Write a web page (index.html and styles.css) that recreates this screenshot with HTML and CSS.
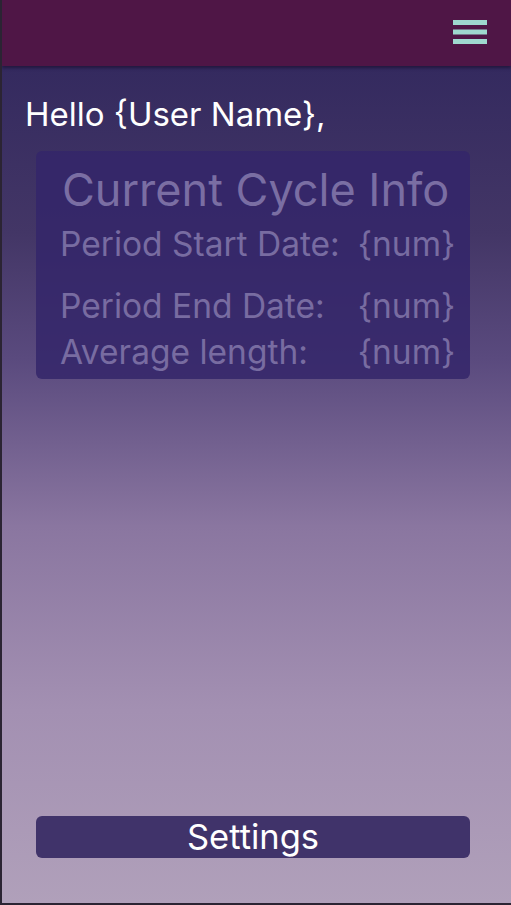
FILE: index.html
```html
<!DOCTYPE html>
<html>
<head>
<meta charset="utf-8">
<link rel="stylesheet" href="styles.css">
</head>
<body>
<div class="frame">
  <header class="topbar">
    <button class="menu" aria-label="Menu">
      <svg width="36" height="28" viewBox="0 0 36 28">
        <rect x="1" y="1" width="34" height="5" fill="#9fd8cf"/>
        <rect x="1" y="10.5" width="34" height="5" fill="#9fd8cf"/>
        <rect x="1" y="20" width="34" height="5" fill="#9fd8cf"/>
      </svg>
    </button>
  </header>
  <main class="content">
    <h1 class="greeting">Hello {User Name},</h1>
    <section class="card">
      <h2 class="card-title">Current Cycle Info</h2>
      <div class="rows">
        <span class="label">Period Start Date:</span><span class="value">{num}</span>
        <span class="label gap">Period End Date:</span><span class="value gap">{num}</span>
        <span class="label">Average length:</span><span class="value">{num}</span>
      </div>
    </section>
    <div class="spacer"></div>
    <button class="settings">Settings</button>
  </main>
</div>
</body>
</html>
```
FILE: styles.css
```css
html, body {
  margin: 0;
  padding: 0;
  height: 100%;
}
body {
  font-family: Inter, "Noto Sans", sans-serif;
  background: #2b2433;
}
.frame {
  height: 903px;
  margin-left: 2px;
  display: flex;
  flex-direction: column;
  overflow: hidden;
}
.topbar {
  height: 66px;
  flex: none;
  background: #4f1646;
  display: flex;
  justify-content: flex-end;
  align-items: flex-start;
  box-shadow: 0 2px 3px rgba(20, 10, 40, 0.6);
  position: relative;
  z-index: 1;
}
.menu {
  background: none;
  border: 0;
  padding: 0;
  margin: 19px 23px 0 0;
  width: 36px;
  height: 28px;
  display: block;
}
.menu svg { display: block; }
.content {
  flex: 1;
  display: flex;
  flex-direction: column;
  background: linear-gradient(180deg, #342a5f 0%, #433666 20%, #5a4a7e 35%, #8a76a0 55%, #a390b2 77%, #b0a0ba 100%);
  padding: 0 41px 45px 34px;
}
.greeting {
  margin: 28px 0 0 -11px;
  font-size: 33px;
  font-weight: 400;
  color: #ffffff;
  line-height: 40px;
  white-space: nowrap;
}
.card {
  margin-top: 17px;
  background: rgba(52, 38, 106, 0.85);
  border-radius: 6px;
  padding: 14px 14px 4px 24px;
}
.card-title {
  margin: 0 0 0 2px;
  font-size: 45px;
  font-weight: 400;
  line-height: 50px;
  color: #7a6ea3;
  white-space: nowrap;
}
.rows {
  margin-top: 6px;
  display: grid;
  grid-template-columns: max-content max-content;
  column-gap: 18px;
  justify-content: start;
  font-size: 33.5px;
  line-height: 46px;
  color: #786ca1;
  white-space: nowrap;
}
.gap { margin-top: 16px; }
.spacer { flex: 1; }
.settings {
  height: 42px;
  border: 0;
  border-radius: 6px;
  background: #40336a;
  color: #ffffff;
  font-family: Inter, "Noto Sans", sans-serif;
  font-size: 34.5px;
  line-height: 42px;
  padding: 0;
}
```
